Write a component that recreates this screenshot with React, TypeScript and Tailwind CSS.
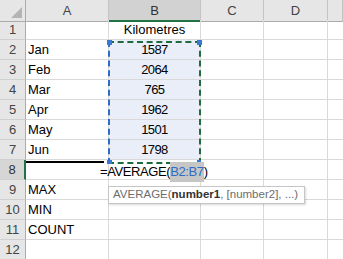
const rows: { n: number; a: string; b: string }[] = [
  { n: 1, a: "", b: "Kilometres" },
  { n: 2, a: "Jan", b: "1587" },
  { n: 3, a: "Feb", b: "2064" },
  { n: 4, a: "Mar", b: "765" },
  { n: 5, a: "Apr", b: "1962" },
  { n: 6, a: "May", b: "1501" },
  { n: 7, a: "Jun", b: "1798" },
  { n: 8, a: "AV", b: "" },
  { n: 9, a: "MAX", b: "" },
  { n: 10, a: "MIN", b: "" },
  { n: 11, a: "COUNT", b: "" },
  { n: 12, a: "", b: "" },
];

const cols = ["A", "B", "C", "D", ""];

export default function App() {
  return (
    <div
      className="relative h-[259px] w-[343px] overflow-hidden bg-white text-[13px] text-black"
      style={{ fontFamily: '"Liberation Sans", Arial, sans-serif' }}
    >
      <div className="grid grid-cols-[26px_83px_92px_63px_64px_1fr] auto-rows-[20px]">
        {/* header row */}
        <div className="relative h-[22px] border-b border-r border-[#ababab] bg-[#e6e6e6]">
          <svg className="absolute left-[10px] top-[7px]" width="13" height="12" viewBox="0 0 13 12">
            <polygon points="12,0 12,11 1,11" fill="#b4b4b4" />
          </svg>
        </div>
        {cols.map((c) =>
          c === "B" ? (
            <div
              key="B"
              className="flex h-[22px] items-center justify-center border-b-2 border-r border-b-[#217346] border-r-[#c4c4c4] bg-[#d2d2d2] pt-[1px] text-[#333]"
            >
              B
            </div>
          ) : (
            <div
              key={c || "E"}
              className="flex h-[22px] items-center justify-center border-b border-r border-b-[#ababab] border-r-[#c4c4c4] bg-[#e6e6e6] pt-[1px] text-[#444]"
            >
              {c}
            </div>
          )
        )}

        {rows.map((r) => (
          <Row key={r.n} {...r} />
        ))}
      </div>

      {/* range being referenced by the formula, with its corner handles */}
      <div className="absolute left-[108px] top-[41px] h-[123px] w-[93px] border-2 border-dashed border-[#1f6b40] border-l-[#2f6cc6]">
        <div className="absolute -left-[3px] -top-[3px] h-[5px] w-[5px] bg-[#3a78d4]" />
        <div className="absolute -right-[3px] -top-[3px] h-[5px] w-[5px] bg-[#3a78d4]" />
        <div className="absolute -bottom-[2px] -left-[3px] h-[4px] w-[5px] bg-[#3a78d4]" />
        <div className="absolute -bottom-[2px] -right-[2px] h-[4px] w-[4px] bg-[#3a78d4]" />
      </div>

      {/* in-cell editor */}
      <div className="absolute left-[26px] top-[161px] h-[2px] w-[78px] bg-black" />
      <div className="absolute left-[100px] top-[162px] flex h-[20px] items-center whitespace-nowrap tracking-[-0.4px]">
        <span>=AVERAGE(</span>
        <span className="bg-[#c6c6c6] text-[#2f6cc6]">B2:B7</span>
        <span>)</span>
      </div>

      {/* function tooltip */}
      <div className="absolute left-[108px] top-[186px] flex h-[18px] w-[197px] items-center whitespace-nowrap border border-[#c6c6c6] bg-white pl-[4px] text-[11.5px] text-[#6d6d6d] shadow-[1px_1px_2px_rgba(0,0,0,0.15)]">
        AVERAGE(<span className="font-bold text-[#333]">number1</span>, [number2], ...)
      </div>
    </div>
  );
}

function Row({ n, a, b }: { n: number; a: string; b: string }) {
  const active = n === 8;
  const inRange = n >= 2 && n <= 7;
  return (
    <>
      <div
        className={
          active
            ? "flex items-center justify-center border-b border-r-2 border-b-[#d0d0d0] border-r-[#217346] bg-[#d6d6d6] text-[#333]"
            : "flex items-center justify-center border-b border-r border-b-[#d0d0d0] border-r-[#ababab] bg-[#e6e6e6] text-[#444]"
        }
      >
        {n}
      </div>
      <div className="flex items-center border-b border-r border-[#d9d9d9] pl-[2px]">{active ? "" : a}</div>
      <div
        className={`flex items-center justify-center border-b border-r border-[#d9d9d9] ${
          inRange ? "bg-[#e9eef8] tracking-[-0.6px]" : ""
        }`}
      >
        {b}
      </div>
      <div className="border-b border-r border-[#d9d9d9]" />
      <div className="border-b border-r border-[#d9d9d9]" />
      <div className="border-b border-[#d9d9d9]" />
    </>
  );
}
